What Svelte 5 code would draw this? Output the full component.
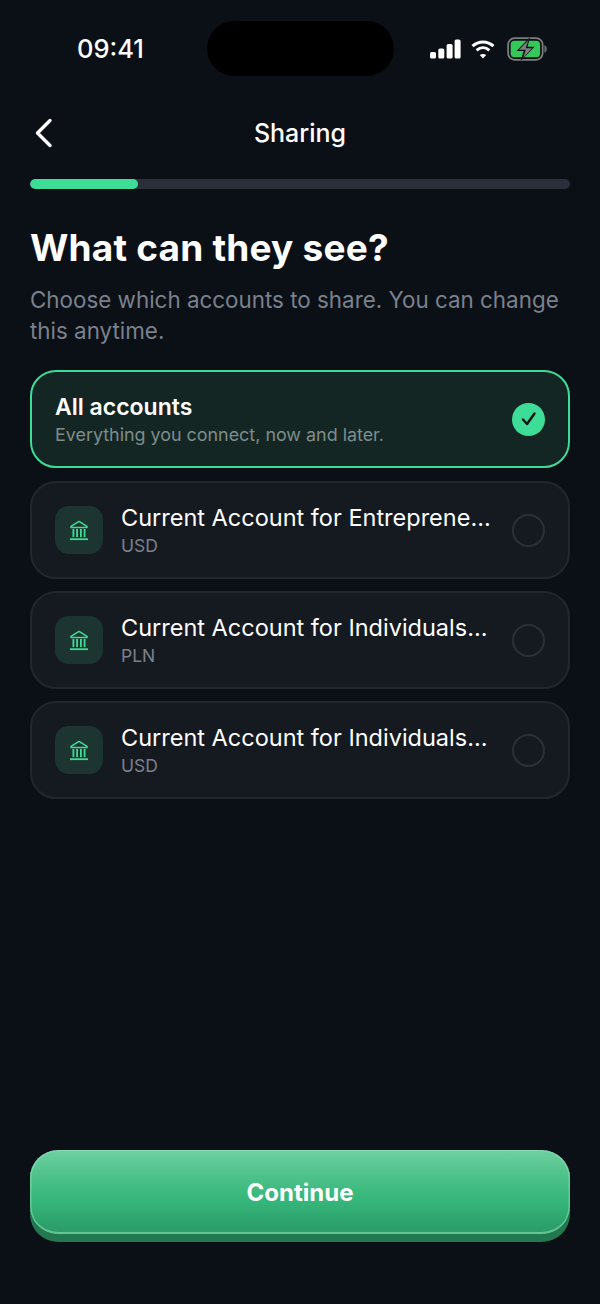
<script lang="ts">
  const accounts = [
    { name: 'Current Account for Entreprene...', currency: 'USD' },
    { name: 'Current Account for Individuals...', currency: 'PLN' },
    { name: 'Current Account for Individuals...', currency: 'USD' },
  ];
</script>

<div class="screen">
  <div class="status-bar">
    <span class="time">09:41</span>
    <div class="island"></div>
    <div class="status-icons">
      <svg width="31" height="20" viewBox="0 0 31 20" fill="#fff">
        <rect x="0" y="13" width="6" height="6.5" rx="1.6" />
        <rect x="8.3" y="9.5" width="6" height="10" rx="1.6" />
        <rect x="16.6" y="5" width="6" height="14.5" rx="1.6" />
        <rect x="24.6" y="0.5" width="6" height="19" rx="1.6" />
      </svg>
      <svg width="24" height="20" viewBox="0 0 24 20" fill="none" stroke="#fff" stroke-width="3">
        <path d="M1.5 7.2C7.5 1.6 16.5 1.6 22.5 7.2" />
        <path d="M5.6 11.4C9.4 8 14.6 8 18.4 11.4" />
        <path d="M12 19.6L8.8 16C10.6 14.6 13.4 14.6 15.2 16Z" fill="#fff" stroke="none" />
      </svg>
      <svg class="battery" width="40" height="24" viewBox="0 0 37 22" fill="none">
        <rect x="1" y="1" width="32" height="20" rx="6" stroke="#7b7f7c" stroke-width="1.6" />
        <rect x="3.4" y="3.4" width="27.2" height="15.2" rx="3.6" fill="#34c759" />
        <path d="M34.6 7.6C36 8 36.8 9.4 36.8 11S36 14 34.6 14.4Z" fill="#6b6f6d" />
        <path d="M21.4 0L8.8 12.8H15.4L12.6 22L25.4 9H19Z" fill="#0b0f16" />
        <path d="M19.8 2.8L11.2 11.6H17.4L15 19.2L23 10.2H17.2Z" fill="#7d8180" />
      </svg>
    </div>
  </div>

  <header class="nav">
    <button class="back" aria-label="Back">
      <svg width="20" height="30" viewBox="0 0 20 30" fill="none" stroke="#fff" stroke-width="3.4" stroke-linecap="round" stroke-linejoin="round">
        <path d="M17 2.5L4.5 15L17 27.5" />
      </svg>
    </button>
    <span class="nav-title">Sharing</span>
  </header>

  <div class="progress"><div class="progress-fill" style="width: 20%"></div></div>

  <h1>What can they see?</h1>
  <p class="lead">Choose which accounts to share. You can change this anytime.</p>

  <div class="list">
    <div class="card selected">
      <div class="card-text">
        <div class="all-title">All accounts</div>
        <div class="all-sub">Everything you connect, now and later.</div>
      </div>
      <div class="check">
        <svg width="18" height="16" viewBox="0 0 18 16" fill="none" stroke="#0b1512" stroke-width="2.4" stroke-linecap="round" stroke-linejoin="round">
          <path d="M3 8.5L7 13L14.5 2.5" />
        </svg>
      </div>
    </div>

    {#each accounts as account}
      <div class="card">
        <div class="bank">
          <svg width="20" height="21" viewBox="0 0 20 21" fill="none" stroke="#3ddc97" stroke-width="1.5">
            <path d="M2 6.4L10 1.4L18 6.4V7.6H2Z" stroke-linejoin="round" />
            <path d="M4.4 9V17M8.1 9V17M11.9 9V17M15.6 9V17" stroke-width="1.8" />
            <path d="M1 19.2H19" stroke-width="1.8" />
          </svg>
        </div>
        <div class="card-text">
          <div class="account-name">{account.name}</div>
          <div class="account-currency">{account.currency}</div>
        </div>
        <div class="radio"></div>
      </div>
    {/each}
  </div>

  <div class="spacer"></div>

  <button class="continue">Continue</button>
</div>

<style>
  :global(body) {
    background: #0b0f16;
  }

  .screen {
    width: 600px;
    height: 1304px;
    box-sizing: border-box;
    padding: 0 30px 63px;
    display: flex;
    flex-direction: column;
    background: #0b0f16;
    color: #fff;
    font-family: Inter, "Liberation Sans", sans-serif;
    overflow: hidden;
  }

  .status-bar {
    height: 76px;
    margin: 0 -30px;
    padding: 21px 0 0 77px;
    box-sizing: border-box;
    display: flex;
    align-items: flex-start;
    flex-shrink: 0;
  }

  .time {
    width: 130px;
    line-height: 55px;
    font-size: 25.5px;
    font-weight: 500;
  }

  .island {
    width: 187px;
    height: 55px;
    border-radius: 28px;
    background: #000;
  }

  .status-icons {
    margin-left: 36px;
    height: 55px;
    display: flex;
    align-items: center;
    gap: 10px;
  }

  .battery {
    margin-left: 2px;
  }

  .nav {
    height: 50px;
    margin-top: 32px;
    position: relative;
    display: flex;
    align-items: center;
    justify-content: center;
    flex-shrink: 0;
  }

  .back {
    position: absolute;
    left: 3px;
    top: 10px;
    padding: 0;
    border: none;
    background: none;
    display: flex;
  }

  .nav-title {
    font-size: 25px;
    font-weight: 500;
  }

  .progress {
    height: 10px;
    margin-top: 21px;
    border-radius: 5px;
    background: #2a2f3a;
    flex-shrink: 0;
    overflow: hidden;
  }

  .progress-fill {
    height: 100%;
    border-radius: 5px;
    background: #3ddc97;
  }

  h1 {
    margin: 37px 0 0;
    font-size: 37px;
    line-height: 44px;
    font-weight: 700;
    letter-spacing: 0.2px;
  }

  .lead {
    margin: 14px 0 0;
    font-size: 22.4px;
    line-height: 31px;
    color: #7a818c;
  }

  .list {
    margin-top: 24px;
    display: flex;
    flex-direction: column;
    gap: 12px;
  }

  .card {
    height: 98px;
    box-sizing: border-box;
    padding: 0 23px;
    display: flex;
    align-items: center;
    border: 2px solid #22272f;
    border-radius: 26px;
    background: #151a21;
  }

  .card.selected {
    margin-bottom: 1px;
    border-color: #3ddc97;
    background: #132624;
  }

  .card-text {
    flex: 1;
    min-width: 0;
    padding-top: 1px;
  }

  .all-title {
    font-size: 23px;
    line-height: 28px;
    font-weight: 600;
  }

  .all-sub {
    margin-top: 2px;
    font-size: 17.9px;
    line-height: 24px;
    color: #7f8d8a;
  }

  .check {
    width: 33px;
    height: 33px;
    border-radius: 50%;
    background: #3ddc97;
    display: flex;
    align-items: center;
    justify-content: center;
  }

  .bank {
    width: 48px;
    height: 48px;
    margin-right: 18px;
    border-radius: 14px;
    background: #1c3531;
    display: flex;
    align-items: center;
    justify-content: center;
    flex-shrink: 0;
  }

  .account-name {
    font-size: 23.5px;
    line-height: 28px;
    font-weight: 420;
    white-space: nowrap;
  }

  .account-currency {
    margin-top: 2px;
    font-size: 17.5px;
    line-height: 24px;
    color: #7a818c;
  }

  .radio {
    width: 33px;
    height: 33px;
    box-sizing: border-box;
    border: 2px solid #2a3038;
    border-radius: 50%;
    flex-shrink: 0;
  }

  .spacer {
    flex: 1;
  }

  .continue {
    height: 84px;
    flex-shrink: 0;
    margin-bottom: 7px;
    border: none;
    border-top: 1.5px solid #88dcb4;
    border-radius: 28px;
    background: linear-gradient(180deg, #6ccf9f 0%, #3dba7f 48%, #35b57a 62%, #2c9e69 92%);
    box-shadow: inset 0 -2px 0 #63c594, inset 1.5px 0 0 rgba(150, 225, 190, 0.5), inset -1.5px 0 0 rgba(150, 225, 190, 0.5), 0 8px 0 #23794f;
    color: #fff;
    font-family: Inter, "Liberation Sans", sans-serif;
    font-size: 24px;
    font-weight: 700;
  }
</style>
